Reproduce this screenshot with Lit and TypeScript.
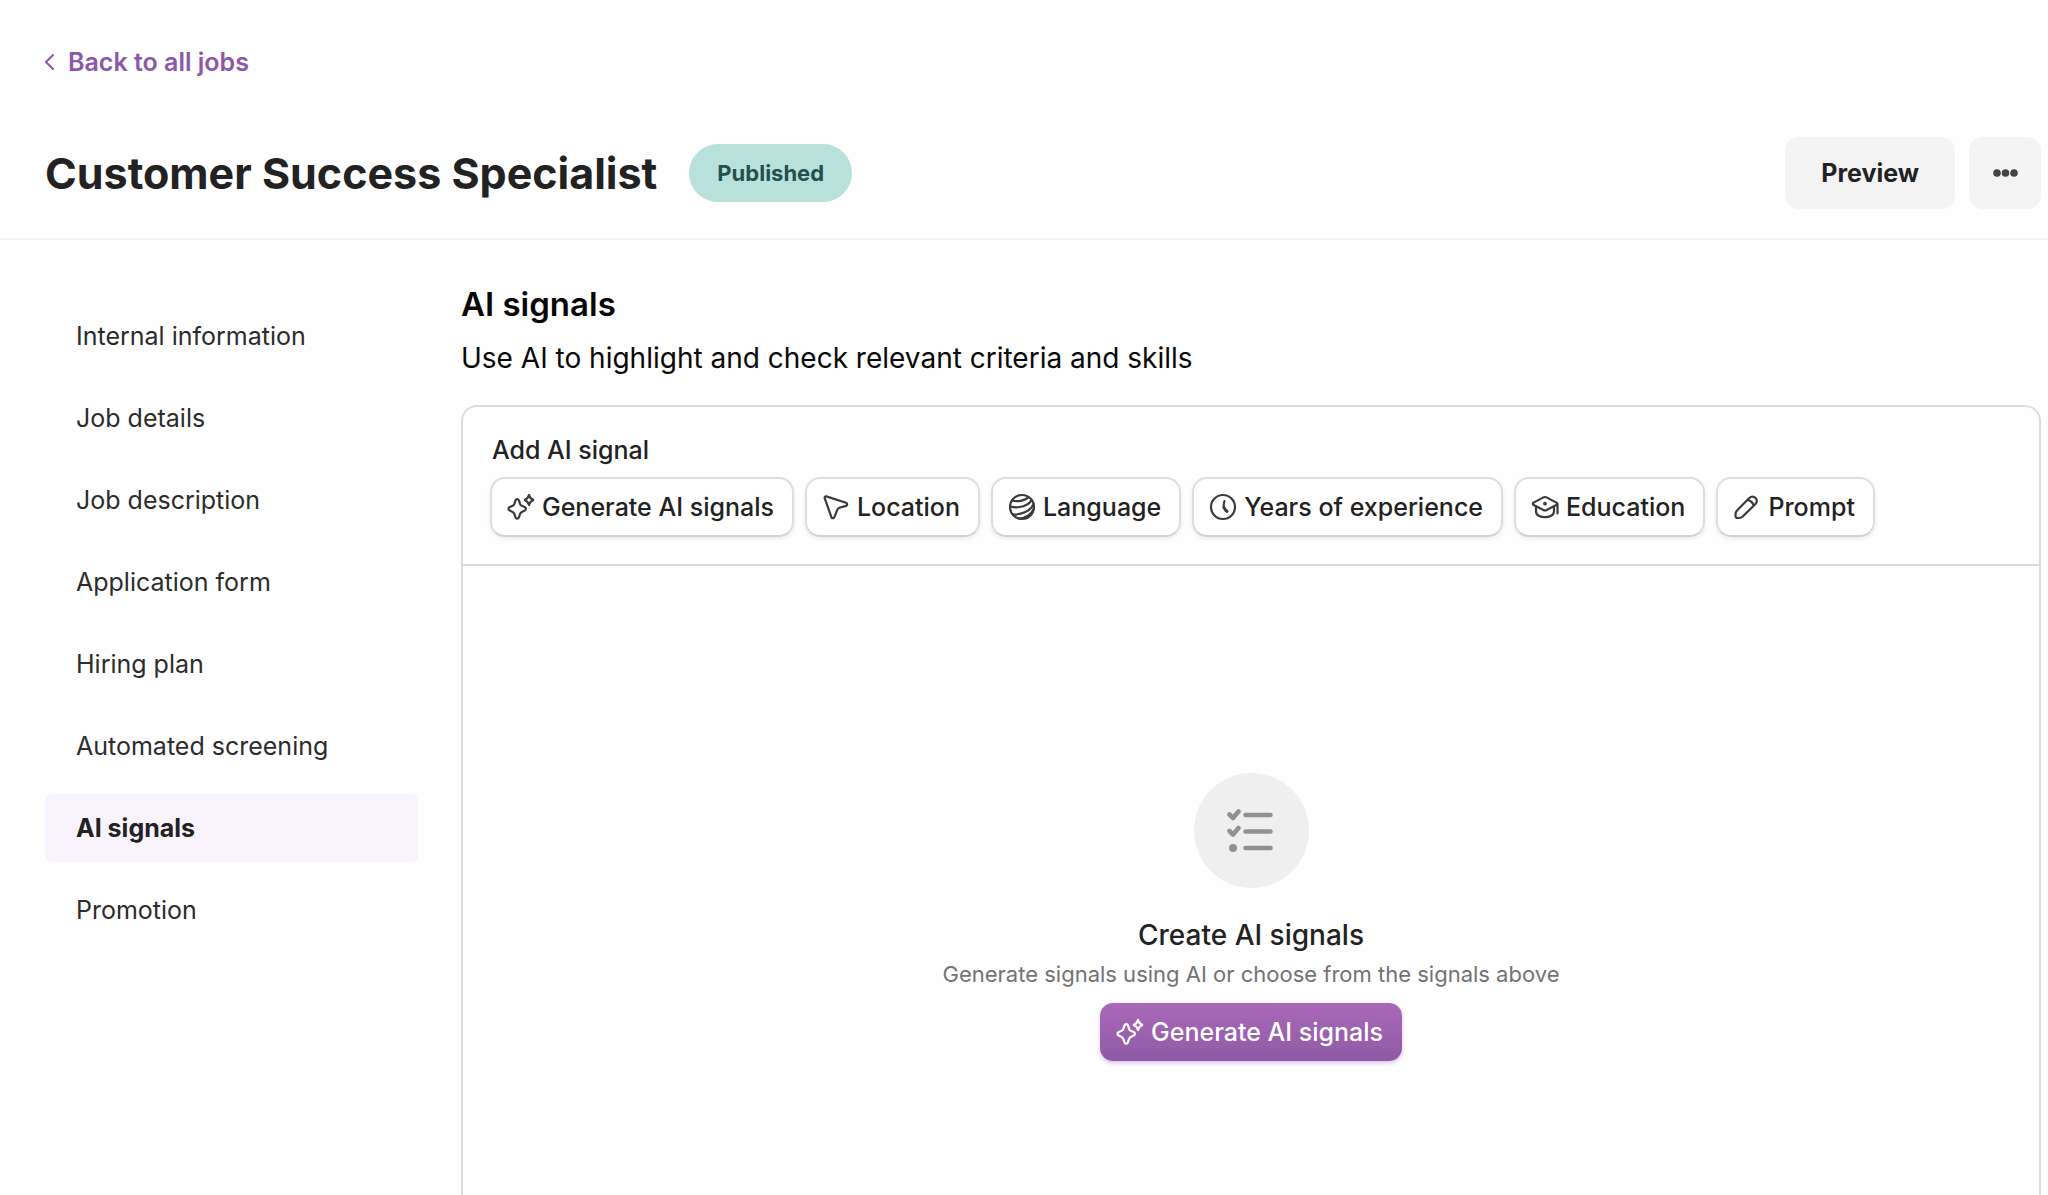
import { LitElement, html, css, svg } from "lit";
import { customElement, state } from "lit/decorators.js";

const icon = (paths: unknown) => html`<svg class="icon" viewBox="0 0 28 28" fill="none" stroke="currentColor" stroke-width="2.2" stroke-linecap="round" stroke-linejoin="round" aria-hidden="true">${paths}</svg>`;

const icons: Record<string, unknown> = {
  sparkles: svg`<path d="M8.500 7.300c.6-1.700 2.800-1.700 3.400 0l1.300 3.800c.3.800.9 1.400 1.600 1.700l2.900 1.300c1.600.7 1.600 2.800 0 3.500l-2.900 1.300c-.7.300-1.300.9-1.600 1.700l-1.300 3.700c-.6 1.700-2.800 1.700-3.400 0l-1.300-3.700c-.3-.8-.9-1.400-1.600-1.700l-2.900-1.300c-1.600-.7-1.600-2.800 0-3.500l2.900-1.300c.7-.3 1.300-.9 1.600-1.700z"/><path d="M22 2l1.500 3 2.700 2-2.700 1.900-1.500 3.100-1.500-3.100L17.800 7l2.700-2z"/>`,
  location: svg`<path d="M4.300 3.400L24 9.800c1.600.6 1.500 2.600 0 3.100l-6.600 1.900c-1 .3-1.600.8-2 1.800l-3 7.600c-.6 1.500-2.600 1.400-3-.1L2.700 5.200c-.3-1.200.6-2.100 1.600-1.800z"/>`,
  language: svg`<circle cx="14" cy="14" r="12"/><path d="M4 7.500C9 9 17 8 20.500 4M2.200 13.500C11 16 21 12.500 23.500 7M5 21.500C13 22 23 18 25.500 11M11 25.500C18 25 24 21 26 15"/>`,
  clock: svg`<circle cx="14" cy="14" r="12"/><path d="M15.500 8c-.8 3-1.300 5-.7 6.300"/><path stroke-width="3" d="M15 14.500c.7 1.600 1.600 3 3 4"/>`,
  education: svg`<path d="M12.400 4.400L2.600 9.600c-1 .5-1 1.800 0 2.300l9.800 5c1 .5 2.200.5 3.200 0l9.800-5c1-.5 1-1.800 0-2.300l-9.800-5.200c-1-.5-2.200-.5-3.200 0z"/><path d="M5 13.500v5c0 7.500 18 7.500 18 0v-5M26.500 11v9.500"/><circle cx="14" cy="10.700" r=".8"/>`,
  prompt: svg`<path d="M16 5.200L4 17.500c-1 1-1.500 2.500-1.500 4v1.500c0 1.500 1 2 2.200 2h1c1.500 0 3-.5 4-1.500L22.500 11c4-4.500-2-10-6.500-5.800zM14.500 7c2.500 0 6 3 6 5.500"/>`,
};

@customElement("app-root")
export class AppRoot extends LitElement {
  @state() private active = "AI signals";

  private nav = ["Internal information", "Job details", "Job description", "Application form", "Hiring plan", "Automated screening", "AI signals", "Promotion"];

  private signals: [string, string][] = [
    ["sparkles", "Generate AI signals"],
    ["location", "Location"],
    ["language", "Language"],
    ["clock", "Years of experience"],
    ["education", "Education"],
    ["prompt", "Prompt"],
  ];

  static styles = css`
    :host { display: flex; flex-direction: column; min-height: 100vh; background: #fefefe; color: #222; font-family: Inter, "Liberation Sans", sans-serif; font-size: 25px; line-height: 32px; }
    * { box-sizing: border-box; }
    button { font: inherit; color: inherit; border: 0; margin: 0; cursor: pointer; }
    h1, h2, h3, p { margin: 0; }
    .header { padding: 46px 7px 29px 45px; border-bottom: 2px solid #f4f4f4; }
    .back { display: inline-flex; align-items: center; gap: 13px; color: #8d57a8; font-weight: 600; text-decoration: none; }
    .back svg { width: 10px; height: 18px; }
    .title-row { display: flex; align-items: center; gap: 32px; margin-top: 59px; }
    h1 { font-size: 43px; line-height: 56px; font-weight: 700; }
    .badge { padding: 13px 28px; border-radius: 29px; background: #b9e1dc; color: #24504c; font-size: 22px; font-weight: 700; }
    .actions { display: flex; gap: 14px; margin-left: auto; }
    .action { height: 72px; border-radius: 14px; background: #f4f4f4; font-weight: 700; padding: 0 36px; }
    .more { width: 72px; padding: 0; display: grid; place-items: center; color: #444; }
    .more svg { width: 25px; height: 8px; }
    .body { display: flex; flex: 1; padding: 0 7px 0 45px; gap: 43px; }
    nav { display: flex; flex-direction: column; gap: 14px; width: 373px; padding-top: 62px; flex: none; }
    .item { padding: 18px 31px; border-radius: 7px; color: #2c2c2c; text-decoration: none; }
    .item.active { background: #f8f3fd; font-weight: 700; color: #222; }
    main { display: flex; flex-direction: column; flex: 1; min-width: 0; padding-top: 42px; }
    h2 { font-size: 33px; line-height: 44px; font-weight: 600; color: #080808; }
    .lead { font-size: 28px; line-height: 36px; margin-top: 14px; color: #080808; }
    .panel { display: flex; flex-direction: column; flex: 1; margin-top: 29px; border: 2px solid #dcdcdc; border-bottom: 0; border-radius: 16px 16px 0 0; }
    .toolbar { padding: 27px 27px; border-bottom: 2px solid #dcdcdc; }
    .label { padding-left: 2px; font-weight: 500; }
    .chips { display: flex; flex-wrap: wrap; gap: 11px; margin-top: 11px; }
    .chip { display: flex; align-items: center; gap: 7px; height: 60px; padding: 0 18px 0 15px; border: 2px solid #dedede; border-bottom-color: #d2d2d2; border-radius: 15px; background: #fff; font-weight: 500; box-shadow: 0 2px 4px rgb(0 0 0 / 8%); }
    .icon { width: 28px; height: 28px; flex: none; }
    .chip .icon { color: #3a3a3a; }
    .empty { display: flex; flex-direction: column; align-items: center; padding: 207px 20px 133px; }
    .disc { display: grid; place-items: center; width: 115px; height: 115px; border-radius: 50%; background: #efefef; color: #919191; }
    .disc svg { width: 50px; height: 50px; }
    h3 { font-size: 28px; line-height: 36px; font-weight: 500; margin-top: 29px; }
    .hint { font-size: 22px; line-height: 28px; margin-top: 7px; color: #737373; }
    .primary { display: flex; align-items: center; gap: 7px; height: 58px; margin-top: 15px; padding: 0 19px 0 16px; border-radius: 13px; background: linear-gradient(#a968b8, #8f5aa6); color: #fff; font-weight: 500; box-shadow: 0 2px 4px rgb(140 80 200 / 35%); }
  `;

  render() {
    return html`
      <header class="header">
        <a class="back" href="#jobs"><svg viewBox="0 0 10 18" fill="none" stroke="currentColor" stroke-width="2" stroke-linejoin="round" stroke-linecap="round" aria-hidden="true"><path d="M8 2L1 9l7 7"/></svg>Back to all jobs</a>
        <div class="title-row">
          <h1>Customer Success Specialist</h1>
          <span class="badge">Published</span>
          <div class="actions">
            <button class="action">Preview</button>
            <button class="action more" aria-label="More"><svg viewBox="0 0 25 8" fill="currentColor"><circle cx="4" cy="4" r="3.800"/><circle cx="12.500" cy="4" r="3.800"/><circle cx="21" cy="4" r="3.800"/></svg></button>
          </div>
        </div>
      </header>
      <div class="body">
        <nav aria-label="Job">
          ${this.nav.map((n) => html`<a href="#" class="item ${n === this.active ? "active" : ""}" @click=${(e: Event) => { e.preventDefault(); this.active = n; }}>${n}</a>`)}
        </nav>
        <main>
          <h2>AI signals</h2>
          <p class="lead">Use AI to highlight and check relevant criteria and skills</p>
          <section class="panel">
            <div class="toolbar">
              <div class="label">Add AI signal</div>
              <div class="chips">${this.signals.map(([i, t]) => html`<button class="chip">${icon(icons[i])}<span>${t}</span></button>`)}</div>
            </div>
            <div class="empty">
              <div class="disc"><svg viewBox="0 0 50 50" fill="none" stroke="currentColor" stroke-width="4.600" stroke-linecap="round" stroke-linejoin="round" aria-hidden="true"><path d="M19.500 9h25M19.500 25.500h25M19.500 42h25M3.500 8.500l3.500 3.500 5.500-6.500M3.500 25l3.500 3.500 5.500-6.500"/><circle cx="7" cy="42" r="4" fill="currentColor" stroke="none"/></svg></div>
              <h3>Create AI signals</h3>
              <p class="hint">Generate signals using AI or choose from the signals above</p>
              <button class="primary">${icon(icons.sparkles)}<span>Generate AI signals</span></button>
            </div>
          </section>
        </main>
      </div>
    `;
  }
}
